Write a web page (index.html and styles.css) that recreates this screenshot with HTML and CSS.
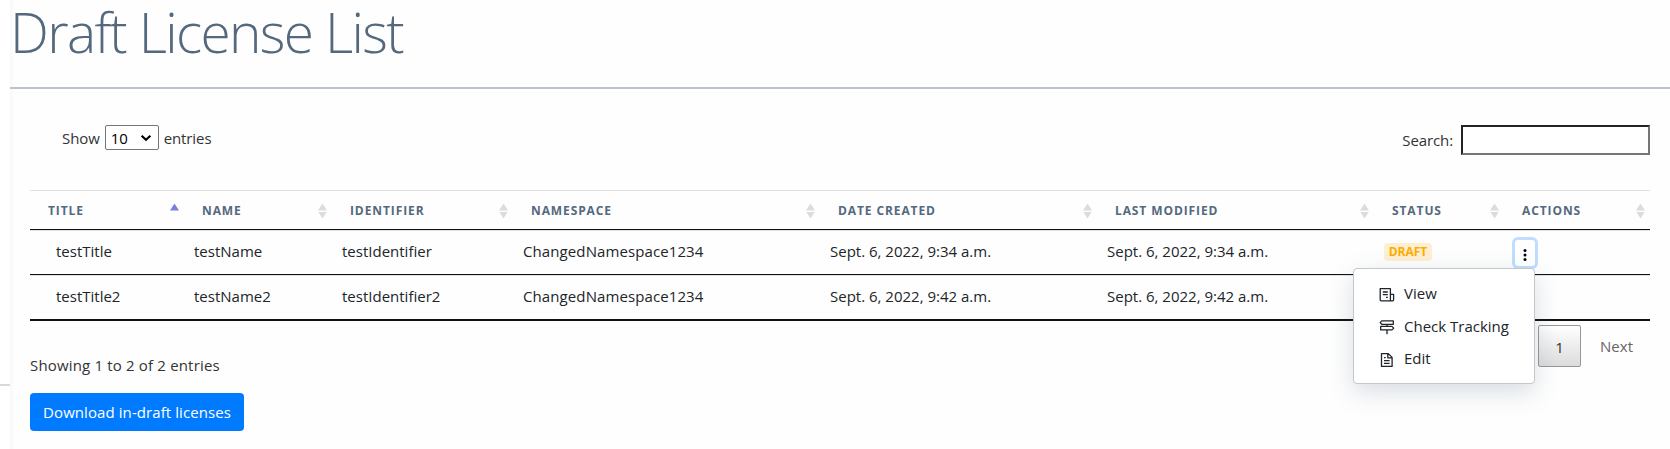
FILE: index.html
```html
<!DOCTYPE html>
<html lang="en">
<head>
<meta charset="utf-8">
<title>Draft License List</title>
<link rel="stylesheet" href="styles.css">
</head>
<body>
<div class="layout">
  <aside class="rail"></aside>
  <main class="content">
    <h1 class="title">Draft License List</h1>
    <div class="controls">
      <label class="length">Show
        <span class="select">10<svg width="12" height="8" viewBox="0 0 12 8"><path d="M1.6 1.7 6 5.8l4.4-4.1" fill="none" stroke="#000" stroke-width="2.2"/></svg></span>
        entries</label>
      <label class="search">Search:<input class="search-input" type="text"></label>
    </div>
    <table class="table">
      <colgroup><col class="c1"><col class="c2"><col class="c3"><col class="c4"><col class="c5"><col class="c6"><col class="c7"><col class="c8"></colgroup>
      <thead>
        <tr>
          <th><div class="head"><span>TITLE</span><i class="sort asc"></i></div></th>
          <th><div class="head"><span>NAME</span><i class="sort"></i></div></th>
          <th><div class="head"><span>IDENTIFIER</span><i class="sort"></i></div></th>
          <th><div class="head"><span>NAMESPACE</span><i class="sort"></i></div></th>
          <th><div class="head"><span>DATE CREATED</span><i class="sort"></i></div></th>
          <th><div class="head"><span>LAST MODIFIED</span><i class="sort"></i></div></th>
          <th><div class="head"><span>STATUS</span><i class="sort"></i></div></th>
          <th><div class="head"><span>ACTIONS</span><i class="sort"></i></div></th>
        </tr>
      </thead>
      <tbody>
        <tr>
          <td class="first">testTitle</td><td>testName</td><td>testIdentifier</td><td class="namespace">ChangedNamespace1234</td>
          <td>Sept. 6, 2022, 9:34 a.m.</td><td>Sept. 6, 2022, 9:34 a.m.</td>
          <td><span class="badge">DRAFT</span></td>
          <td class="actions">
            <button class="kebab" aria-label="Actions"><svg width="4" height="14" viewBox="0 0 4 14"><circle cx="2" cy="2.4" r="1.5"/><circle cx="2" cy="7" r="1.5"/><circle cx="2" cy="11.6" r="1.5"/></svg></button>
            <div class="menu">
              <a class="item"><svg class="icon" viewBox="0 0 16 16"><path d="M1.2 1.7h10.2v12.1H2.2a1 1 0 0 1-1-1zM11.4 7.4h3.2v5.4a1 1 0 0 1-1 1h-2.2"/><path d="M3.8 5h5M3.8 7.6h5M7 10.3h1.8"/></svg><span>View</span></a>
              <a class="item"><svg class="icon" viewBox="0 0 16 16"><path d="M2.7 1.9h11.6v3.4H2.7L1.2 3.6zM13 7.4H1.7v3.5H13l1.7-1.8zM8 5.3v2.1M8 10.9v4.3"/></svg><span>Check Tracking</span></a>
              <a class="item"><svg class="icon" viewBox="0 0 16 16"><path d="M2.5 1.6h6.8l3.8 3.8v9H2.5zM8.8 1.6v4.2h4.3M5 5.7h1.7M5 8.6h5.6M5 11.4h5.6"/></svg><span>Edit</span></a>
            </div>
          </td>
        </tr>
        <tr>
          <td class="first">testTitle2</td><td>testName2</td><td>testIdentifier2</td><td class="namespace">ChangedNamespace1234</td>
          <td>Sept. 6, 2022, 9:42 a.m.</td><td>Sept. 6, 2022, 9:42 a.m.</td><td></td><td></td>
        </tr>
      </tbody>
    </table>
    <div class="footer">
      <div class="summary">
        <div class="info">Showing 1 to 2 of 2 entries</div>
        <button class="download">Download in-draft licenses</button>
      </div>
      <div class="pages"><span class="page">1</span><span class="next">Next</span></div>
    </div>
  </main>
</div>
</body>
</html>
```
FILE: styles.css
```css
* { box-sizing: border-box; }
body {
  margin: 0;
  background: #fff;
  color: #212529;
  font: 15px/24px "Open Sans", "Noto Sans", sans-serif;
}
.layout { display: flex; height: 449px; }
.rail { width: 10px; height: 386px; border-bottom: 2px solid #d5dae0; }
.content {
  flex: 1;
  background: linear-gradient(90deg, #f9f9fa, #fefefe 5px);
}
.title {
  margin: 0;
  height: 89px;
  border-bottom: 2px solid #bcc3ca;
  color: #54697e;
  font-size: 55px;
  font-weight: 300;
  letter-spacing: -1.65px;
  line-height: 64px;
}
.controls {
  display: flex;
  justify-content: space-between;
  align-items: flex-start;
  height: 101px;
  padding: 36px 20px 0 52px;
  color: #333;
}
.length { display: flex; align-items: center; gap: 5px; height: 25px; letter-spacing: -.1px; }
.select {
  display: flex;
  align-items: center;
  justify-content: space-between;
  width: 54px;
  height: 25px;
  padding: 0 6px 0 5px;
  border: 1px solid #767676;
  border-radius: 2px;
  background: #fff;
  color: #000;
}
.search { display: flex; align-items: center; gap: 8px; letter-spacing: -.1px; }
.search-input {
  width: 189px;
  height: 30px;
  margin: 0;
  padding: 0;
  border: 2px solid;
  border-color: #212529 #767676 #767676 #212529;
  background: #fff;
}
.table {
  width: 1620px;
  margin-left: 20px;
  table-layout: fixed;
  border-collapse: separate;
  border-spacing: 0;
  border-bottom: 2px solid #111;
}
.c1 { width: 154px; }
.c2 { width: 148px; }
.c3 { width: 181px; }
.c4 { width: 307px; }
.c5 { width: 277px; }
.c6 { width: 277px; }
.c7 { width: 130px; }
.c8 { width: 146px; }
th {
  height: 40px;
  padding: 2px 0 0;
  border-top: 1px solid #dee2e6;
  border-bottom: 1px solid #111;
}
.head {
  display: flex;
  align-items: center;
  justify-content: space-between;
  padding: 0 5px 0 18px;
  color: #54697e;
  font-size: 12px;
  font-weight: 700;
  letter-spacing: .9px;
  line-height: 18px;
  white-space: nowrap;
}
.sort { display: flex; flex-direction: column; gap: 1px; width: 9px; height: 15px; }
.sort::before,
.sort::after { content: ""; height: 7px; background: #dcdcdc; }
.sort::before { clip-path: polygon(50% 0, 100% 100%, 0 100%); }
.sort::after { clip-path: polygon(0 0, 100% 0, 50% 100%); }
.sort.asc::before { background: #7b7fdb; }
.sort.asc::after { background: none; }
td {
  height: 45px;
  padding: 0 0 3px 10px;
  border-top: 1px solid #dee2e6;
  border-bottom: 1px solid #111;
  white-space: nowrap;
}
tr:last-child td { height: 44px; border-bottom: 0; }
td.first { padding-left: 26px; }
.namespace { letter-spacing: .1px; }
.badge {
  display: block;
  width: 48px;
  height: 18px;
  margin-top: 2px;
  border-radius: 4px;
  background: #ffefd1;
  color: #ffab00;
  font-size: 12px;
  font-weight: 700;
  line-height: 18px;
  text-align: center;
}
.actions { position: relative; }
.kebab {
  display: flex;
  align-items: center;
  justify-content: center;
  width: 20px;
  height: 26px;
  margin: 4px 0 0 1px;
  padding: 3px 0 0;
  border: 0;
  border-radius: 3px;
  background: #fff;
  box-shadow: 0 0 0 3px #bfdeff;
}
.menu {
  position: absolute;
  top: 37px;
  right: 115px;
  width: 182px;
  height: 116px;
  padding: 8px 0 0 25px;
  border: 1px solid #c3c6ca;
  border-radius: 4px;
  background: #fff;
  box-shadow: 0 8px 24px rgba(84, 105, 126, .22);
}
.item { display: flex; align-items: center; gap: 9px; height: 32.5px; }
.icon {
  width: 16px;
  height: 16px;
  margin-top: 3px;
  fill: none;
  stroke: #212529;
  stroke-width: 1.3;
  stroke-linejoin: round;
}
.footer { display: flex; justify-content: space-between; padding: 0 17px 0 20px; }
.summary { padding-top: 32px; color: #333; }
.info { letter-spacing: .17px; }
.download {
  display: block;
  width: 214px;
  height: 38px;
  margin-top: 16px;
  padding: 0;
  border: 0;
  border-radius: 4px;
  background: #007bff;
  color: #fff;
  font: inherit;
  letter-spacing: .08px;
}
.pages { display: flex; align-items: center; gap: 19px; height: 42px; margin-top: 4px; padding-right: 20px; }
.page {
  width: 43px;
  height: 42px;
  border: 1px solid #979797;
  border-radius: 2px;
  background: linear-gradient(#fff, #dcdcdc);
  color: #333;
  line-height: 42px;
  text-align: center;
}
.next { color: #666; }
```
